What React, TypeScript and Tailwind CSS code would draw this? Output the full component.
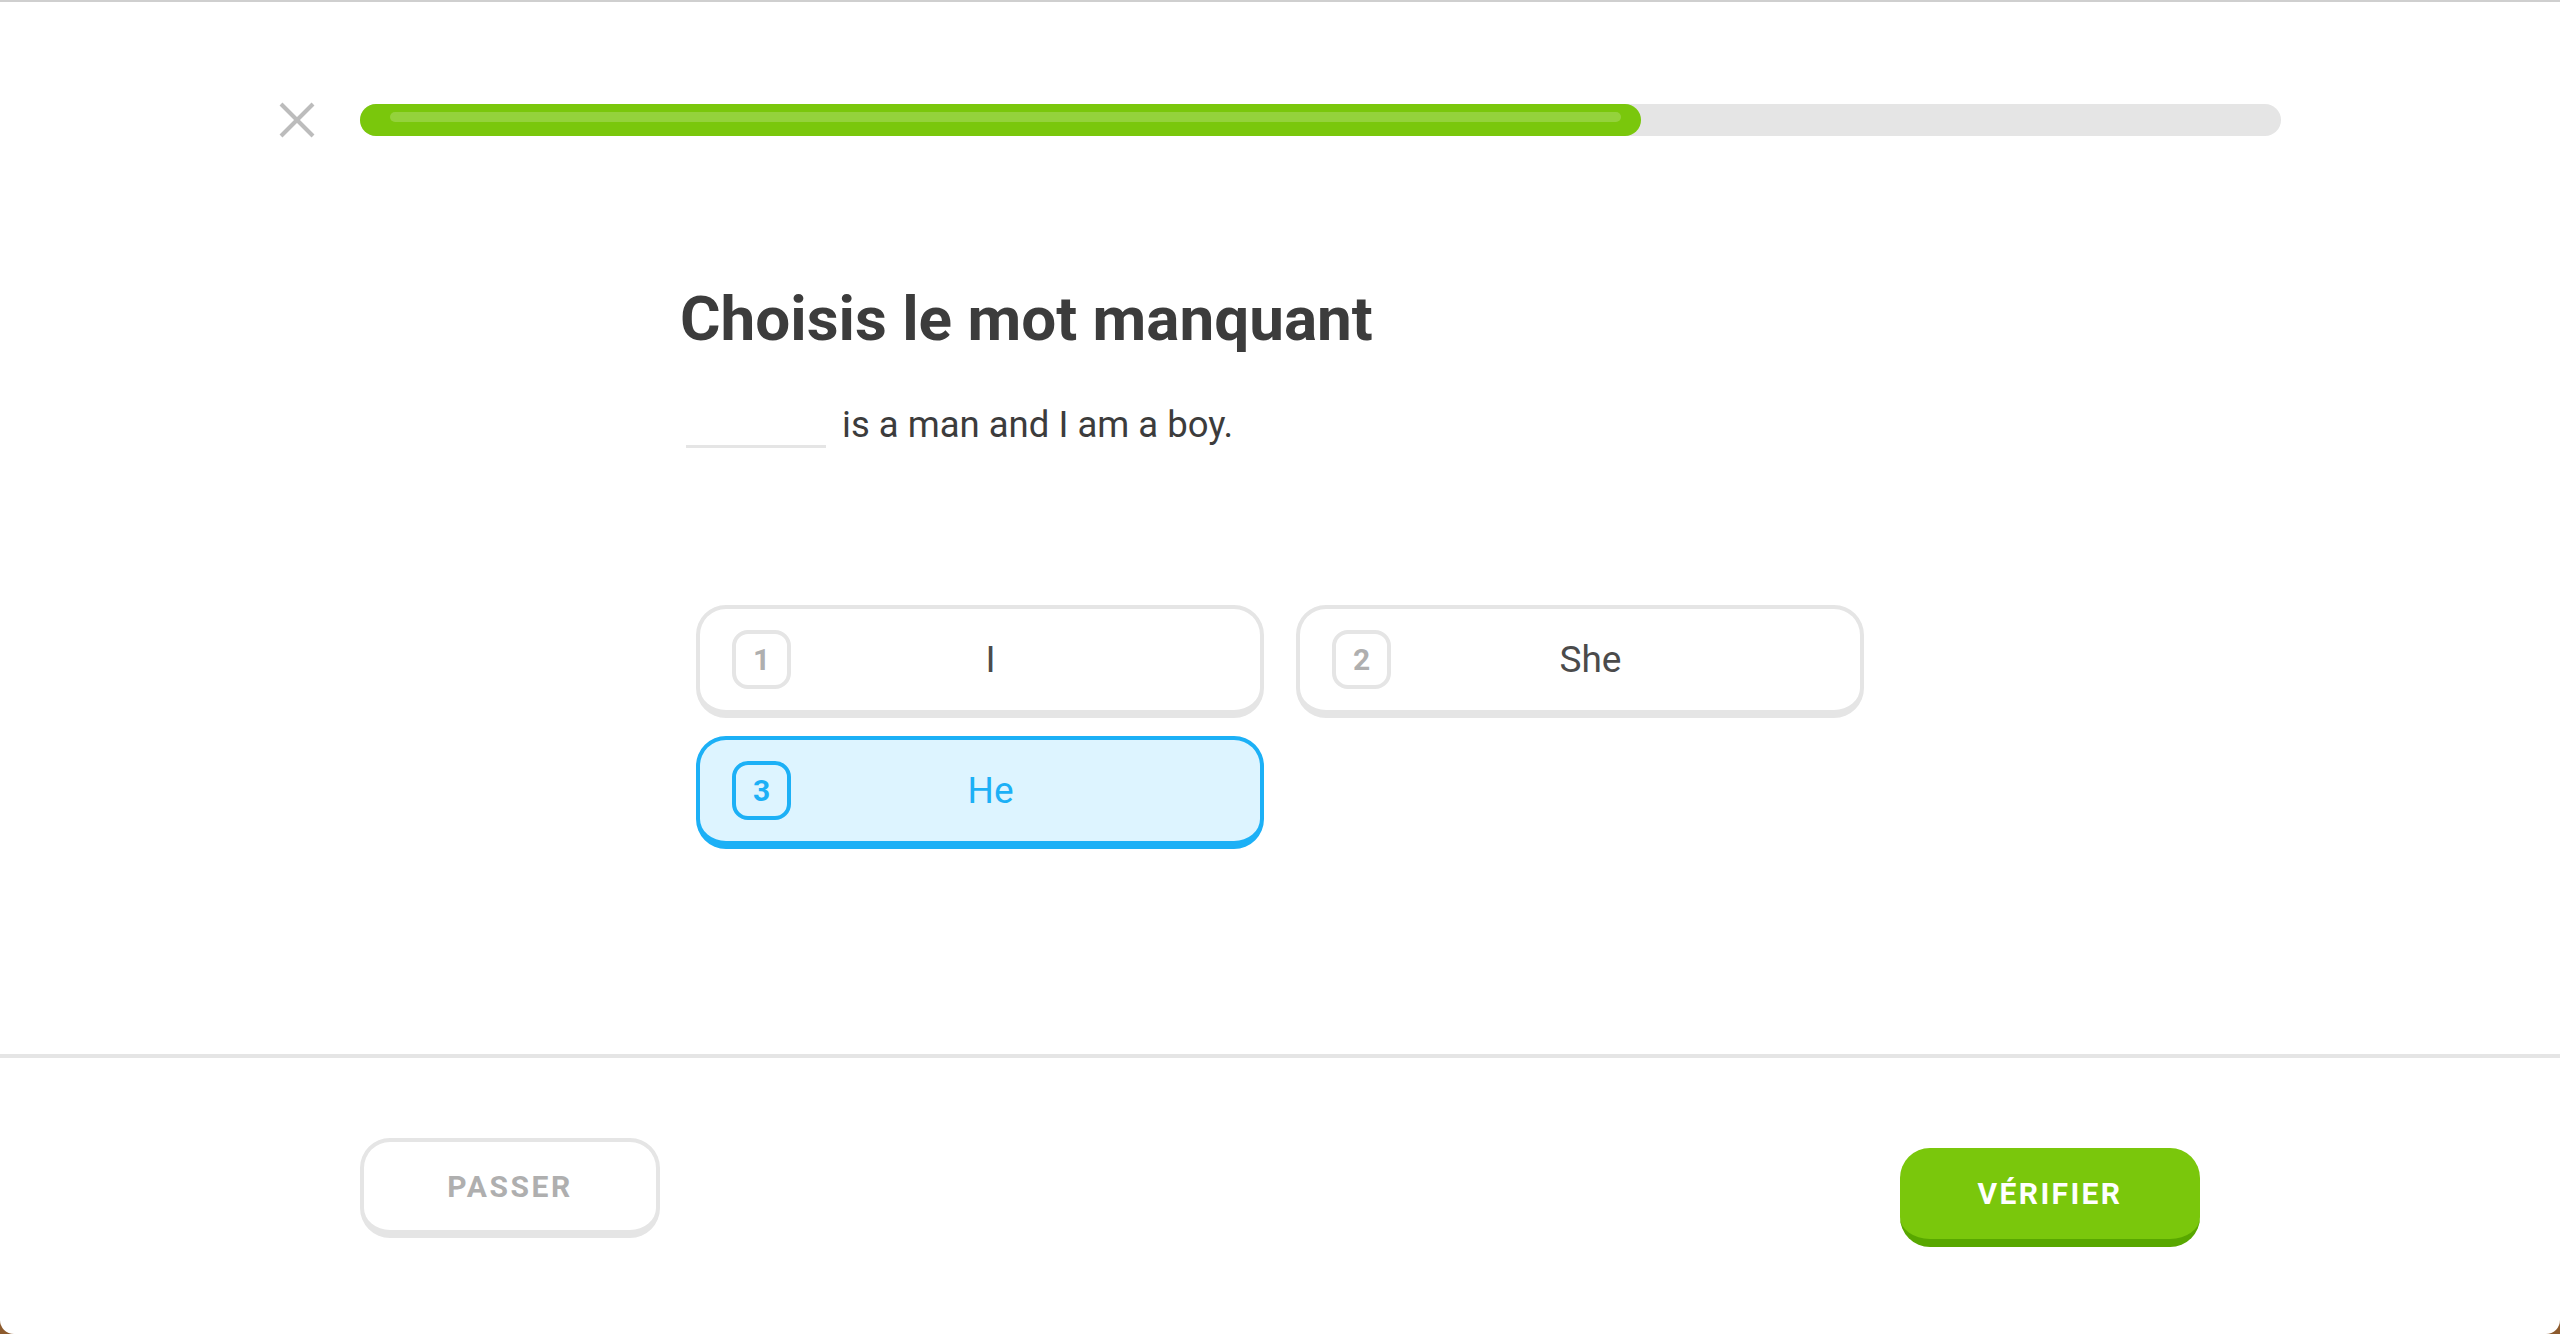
import React from "react";

const font = { fontFamily: "Roboto, 'Liberation Sans', sans-serif" };

function Choice({ n, label, selected }: { n: number; label: string; selected?: boolean }) {
  return (
    <div
      className={
        selected
          ? "h-[113px] rounded-[30px] border-4 border-b-8 border-[#1cb0f6] bg-[#ddf4ff] flex items-center pl-[32px] pr-[70px]"
          : "h-[113px] rounded-[30px] border-4 border-b-8 border-[#e5e5e5] bg-white flex items-center pl-[32px] pr-[70px]"
      }
    >
      <div
        className={
          selected
            ? "w-[59px] h-[59px] rounded-[16px] border-4 border-[#1cb0f6] flex items-center justify-center text-[30px] font-bold text-[#1cb0f6]"
            : "w-[59px] h-[59px] rounded-[16px] border-4 border-[#e5e5e5] flex items-center justify-center text-[30px] font-bold text-[#afafaf]"
        }
      >
        {n}
      </div>
      <span
        className={
          selected
            ? "flex-1 text-center text-[37px] text-[#1cb0f6]"
            : "flex-1 text-center text-[37px] text-[#4b4b4b]"
        }
      >
        {label}
      </span>
    </div>
  );
}

export default function App() {
  return (
    <div className="w-full h-[1334px] bg-[#8d5b2e]" style={font}>
      <div className="h-full bg-white rounded-b-[14px] border-t-2 border-[#cfcfcf] flex flex-col">
        <main className="flex-1 flex flex-col">
          <div className="pt-[100px] px-[279px] flex items-center gap-[45px]">
            <svg width="36" height="36" viewBox="0 0 36 36" className="shrink-0">
              <line x1="2" y1="2" x2="34" y2="34" stroke="#bcbcbc" strokeWidth="4" />
              <line x1="34" y1="2" x2="2" y2="34" stroke="#bcbcbc" strokeWidth="4" />
            </svg>
            <div className="flex-1 h-[32px] rounded-full bg-[#e5e5e5] flex">
              <div className="w-2/3 h-full rounded-full bg-[#7ac70c] pt-[8px] pl-[30px] pr-[20px]">
                <div className="h-[10px] rounded-full bg-white/20" />
              </div>
            </div>
          </div>

          <div className="w-[1200px] mx-auto flex flex-col">
            <h1 className="mt-[150px] text-[62px] leading-[62px] font-bold text-[#3c3c3c]">
              Choisis le mot manquant
            </h1>
            <div className="mt-[53px] flex items-start">
              <div className="ml-[6px] w-[140px] h-[45px] border-b-[3px] border-[#e5e5e5]" />
              <span className="ml-[16px] text-[36.5px] leading-[44px] text-[#3c3c3c]">
                is a man and I am a boy.
              </span>
            </div>
            <div className="mt-[157px] px-[16px] grid grid-cols-2 gap-x-[32px] gap-y-[18px]">
              <Choice n={1} label="I" />
              <Choice n={2} label="She" />
              <Choice n={3} label="He" selected />
            </div>
          </div>
        </main>

        <footer className="h-[280px] border-t-4 border-[#e5e5e5] px-[360px] pt-[80px] flex items-start justify-between">
          <button className="w-[300px] h-[100px] rounded-[30px] border-4 border-b-8 border-[#e5e5e5] bg-white text-[30px] font-bold tracking-[2.6px] text-[#afafaf]">
            PASSER
          </button>
          <button className="mt-[10px] w-[300px] h-[99px] rounded-[30px] border-b-8 border-[#58a700] bg-[#7ac70c] text-[30px] font-bold tracking-[2.4px] text-white">
            VÉRIFIER
          </button>
        </footer>
      </div>
    </div>
  );
}
